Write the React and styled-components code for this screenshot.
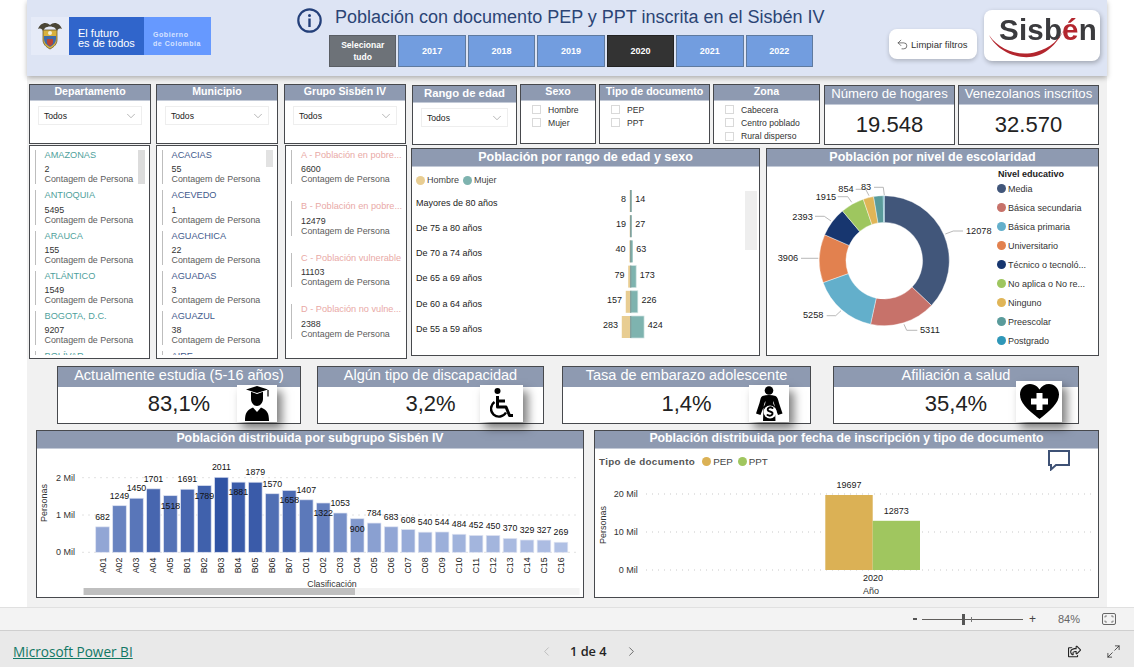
import React from "react";
import styled, { createGlobalStyle } from "styled-components";
import { ChevronDown, ChevronLeft, ChevronRight, Undo2, Maximize2 } from "lucide-react";
import { FaRegShareSquare } from "react-icons/fa";

const Global = createGlobalStyle`
  * { box-sizing: border-box; }
  html, body { margin: 0; padding: 0; background: #fff; }
  body { font-family: "Liberation Sans", Arial, sans-serif; color: #222; }
`;

const Page = styled.div`
  width: 1134px; height: 667px; overflow: hidden; display: flex; flex-direction: column; background: #fff;
`;
const Stage = styled.main`
  width: 1080px; height: 607px; margin-left: 27px; background: #f1f1f1; flex: none; filter: blur(.3px);
`;
const Header = styled.header`
  height: 76px; background: #dde4f4; display: flex; padding-left: 4px;
  box-shadow: 0 2px 5px rgba(0,0,0,.28); position: relative;
`;
const Logo = styled.div`
  width: 180px; height: 38px; margin-top: 17px; display: flex; flex: none;
`;
const Arms = styled.div`
  width: 38px; background: #e6ebf8; display: flex; align-items: center; justify-content: center;
`;
const LogoMain = styled.div`
  width: 75px; background: #3065cb; color: #fff; font-size: 11px; line-height: 10px; padding: 11px 0 0 9px;
`;
const LogoSide = styled.div`
  flex: 1; background: #6699ff; color: #d7e3ff; font-size: 7px; line-height: 9px; letter-spacing: .55px; padding: 13px 0 0 9px; font-weight: 700;
`;
const TitleBlock = styled.div`
  width: 527px; margin-left: 86px; padding-top: 8px; flex: none;
`;
const TitleRow = styled.div`
  height: 27px; display: flex; gap: 13px;
`;
const InfoIcon = styled.svg` flex: none; `;
const Title = styled.h1`
  margin: -1px 0 0; font-size: 18px; line-height: 20px; font-weight: 400; color: #2b4475; white-space: nowrap;
`;
const YearRow = styled.div`
  margin-left: 32px; width: 484px; height: 32px; display: grid; grid-template-columns: repeat(7, 1fr); gap: 2px;
`;
const YearButton = styled.button`
  border: 1px solid ${p => p.$kind === "on" ? "#222" : p.$kind === "all" ? "#5a5e64" : "#5f7a9f"};
  background: ${p => p.$kind === "on" ? "#333333" : p.$kind === "all" ? "#6d7278" : "#729ddf"};
  color: #fff; font: 700 ${p => p.$kind === "all" ? "8.5px/12px" : "9px/12px"} "Liberation Sans", sans-serif; padding: 0;
`;
const ClearButton = styled.button`
  width: 88px; height: 30px; margin: 29px 0 0 65px; border: 0; border-radius: 8px; background: #fff; flex: none;
  box-shadow: 0 2px 4px rgba(0,0,0,.2); display: flex; align-items: center; gap: 2px; padding: 0 0 0 7px;
  font: 400 9.5px "Liberation Sans", sans-serif; color: #333; white-space: nowrap;
`;
const SisbenBox = styled.div`
  position: relative; width: 116px; height: 51px; margin: 10px 0 0 7px; background: #fff; border-radius: 8px; flex: none;
  box-shadow: 1px 2px 5px rgba(0,0,0,.28); padding: 4px 0 0 15px;
  font-size: 29.5px; line-height: 32px; font-weight: 700; color: #3b3b3e; letter-spacing: .2px;
`;
const Accent = styled.span` color: #b3262e; `;
const Swoosh = styled.svg` position: absolute; left: 0; top: 0; `;

const Row = styled.div`
  display: flex; align-items: flex-start; margin-top: ${p => p.$mt}px; padding-left: ${p => p.$pl}px;
  position: relative; z-index: ${p => p.$z || 0};
`;
const Panel = styled.section`
  flex: none; width: ${p => p.$w}px; height: ${p => p.$h}px; margin-left: ${p => p.$ml || 0}px; margin-top: ${p => p.$mt || 0}px;
  background: #fff; border: 1px solid #47494d; position: relative; display: flex; flex-direction: column;
`;
const Head = styled.div`
  flex: none; height: ${p => p.$h}px; background: #8e9ab1; color: #fff; text-align: center; white-space: nowrap;
  font-size: ${p => p.$fs}px; font-weight: ${p => p.$fw || 400}; line-height: ${p => p.$lh || p.$h}px;
  border-bottom: ${p => p.$rule ? "1px solid #c3cad7" : "0"};
`;
const DropBox = styled.div`
  margin: 5px 8px 0; height: 19px; border: 1px solid #eee; display: flex; align-items: center; justify-content: space-between;
  padding: 0 3px 0 5px; font-size: 8.6px; color: #222;
`;
const Checks = styled.div`
  display: flex; flex-direction: column; gap: 4.4px; padding: ${p => p.$pad};
`;
const CheckRow = styled.label`
  display: flex; align-items: center; height: 9px; font-size: 8.6px; color: #333; white-space: nowrap;
`;
const Box = styled.span`
  width: 9px; height: 9px; border: 1px solid #d9d9d9; margin-right: ${p => p.$gap}px; background: #fff; flex: none;
`;
const BigNumber = styled.div`
  flex: 1; display: flex; align-items: center; justify-content: center; font-size: 22px; color: #222;
`;
const ListView = styled.div`
  height: 209px; overflow: hidden; padding-top: 4px;
`;
const ListItem = styled.div`
  height: 34.3px; margin: 0 0 ${p => p.$gap}px 5px; padding-left: ${p => p.$pl}px; border-left: 1px solid #bdbdbd; font-size: 8.9px; line-height: 10px; white-space: nowrap;
`;
const ItemTitle = styled.div` color: ${p => p.$c}; margin-bottom: 4.3px; font-size: 9.2px; `;
const ItemCount = styled.div` color: #333; `;
const ItemLabel = styled.div` color: #5c5c5c; `;
const Thumb = styled.div`
  position: absolute; top: ${p => p.$t}px; left: ${p => p.$l}px; width: ${p => p.$w}px; height: ${p => p.$h}px; background: ${p => p.$c};
`;
const LegendRow = styled.div`
  display: flex; align-items: center; height: 19px; flex: none; padding: ${p => p.$pt ?? 5}px 0 0 ${p => p.$pl}px; font-size: ${p => p.$fs || 9}px; color: #444; white-space: nowrap;
`;
const Dot = styled.span`
  width: ${p => p.$s || 9}px; height: ${p => p.$s || 9}px; border-radius: 50%; background: ${p => p.$c}; margin-right: ${p => p.$mr || 2}px; flex: none;
`;
const LegendName = styled.span`
  margin-right: ${p => p.$mr}px; font-weight: ${p => p.$strong ? 700 : 400}; letter-spacing: ${p => p.$strong ? ".35px" : "0"}; color: ${p => p.$strong ? "#555" : "#444"};
`;
const ChartBody = styled.div` flex: 1; display: flex; position: relative; min-height: 0; `;
const Plot = styled.svg` display: block; flex: none; `;
const T = styled.text`
  font-family: "Liberation Sans", sans-serif; font-size: ${p => p.$fs || 9}px; fill: ${p => p.$c || "#222"};
`;
const EduLegend = styled.div`
  position: absolute; left: 231px; top: 1px; width: 100px; font-size: 9px; color: #333; white-space: nowrap;
`;
const EduTitle = styled.div` font-weight: 700; color: #222; line-height: 13px; margin-bottom: -2px; `;
const EduItem = styled.div`
  display: flex; align-items: center; height: 19.05px; margin-left: -1px;
`;
const KpiValue = styled.div`
  flex: 1; display: flex; align-items: center; justify-content: center; font-size: 22px; color: #222; padding-bottom: 2px;
`;
const KpiIcon = styled.div`
  position: absolute; right: ${p => p.$r}px; top: ${p => p.$t}px; width: ${p => p.$w}px; height: ${p => p.$h}px; background: #fff;
  box-shadow: 5px 6px 9px rgba(0,0,0,.5); display: flex; align-items: center; justify-content: center; color: #000;
`;
const Bubble = styled.svg` position: absolute; left: 453px; top: 19px; `;

const StatusBar = styled.div`
  height: 24px; flex: none; background: #f3f3f3; border-top: 1px solid #e0e0e0; border-bottom: 1px solid #cfcfcf; display: flex; align-items: center; padding-left: 913px; font-size: 11px; color: #605e5c;
`;
const ZoomMinus = styled.span` width: 4px; height: 2px; background: #555; `;
const ZoomTrack = styled.div` position: relative; width: 101px; height: 1px; background: #605e5c; margin: 0 6px 0 5px; `;
const ZoomThumb = styled.span` position: absolute; left: 40px; top: -5px; width: 3px; height: 11px; background: #555; `;
const ZoomTick = styled.span` position: absolute; left: 49px; top: -2px; width: 1px; height: 5px; background: #777; `;
const ZoomPlus = styled.span` width: 9px; font-size: 12px; color: #444; `;
const ZoomPct = styled.span` margin-left: 20px; font-size: 11px; color: #666; `;
const FitIcon = styled.svg` margin-left: 22px; `;
const Footer = styled.footer`
  flex: 1; background: #e9e9e9; display: flex; align-items: center; padding: 4px 0 0 13px;
`;
const PowerLink = styled.a`
  font: 400 13.6px "Open Sans", sans-serif; color: #117865; text-decoration: underline; width: 526px; flex: none;
`;
const Pager = styled.div`
  display: flex; align-items: center; font: 600 12.8px "Open Sans", sans-serif; color: #252423; width: 500px; flex: none;
`;
const PageText = styled.span` margin: 0 17px 0 16px; `;
const FootIcons = styled.div` display: flex; gap: 25px; margin-left: 29px; color: #222; align-items: center; `;

const Arm = () => (
  <svg width="26" height="30" viewBox="0 0 26 30">
    <path d="M13 4C9 0 3 2 1 8c3-1 4 0 5 2l2-3c3-2 7-2 10 0l2 3c1-2 2-3 5-2-2-6-8-8-12-4z" fill="#4b4636" />
    <path d="M6 9h14v10c0 4-3 7-7 9-4-2-7-5-7-9z" fill="#d9b13c" stroke="#6d5a2c" strokeWidth=".8" />
    <path d="M7 15h12v3c0 3-2 6-6 8-4-2-6-5-6-8z" fill="#3f6aa8" />
    <path d="M10 18h6v3c0 2-1 3-3 4-2-1-3-2-3-4z" fill="#b84436" />
    <circle cx="13" cy="12" r="2" fill="#f4f0d8" />
  </svg>
);

const SelectFilter = ({ title, w, ml, mt, h = 60, fs = 10.6 }) => (
  <Panel $w={w} $ml={ml} $mt={mt} $h={h}>
    <Head $h={mt ? 17 : 16} $fs={fs} $fw={700} $lh={mt ? 15 : 13} $rule>{title}</Head>
    <DropBox>Todos<ChevronDown size={14} strokeWidth={.8} color="#666" /></DropBox>
  </Panel>
);
const CheckFilter = ({ title, w, ml, items, pad, gap }) => (
  <Panel $w={w} $ml={ml} $h={60}>
    <Head $h={16} $fs={10.6} $fw={700} $lh={13} $rule>{title}</Head>
    <Checks $pad={pad}>
      {items.map(i => <CheckRow key={i}><Box $gap={gap} />{i}</CheckRow>)}
    </Checks>
  </Panel>
);
const NumberCard = ({ title, value, w, ml }) => (
  <Panel $w={w} $ml={ml} $mt={1} $h={60}>
    <Head $h={19} $fs={13.2} $lh={15} $rule>{title}</Head>
    <BigNumber>{value}</BigNumber>
  </Panel>
);

const deptos = [["AMAZONAS", 2], ["ANTIOQUIA", 5495], ["ARAUCA", 155], ["ATLÁNTICO", 1549], ["BOGOTA, D.C.", 9207], ["BOLÍVAR"]];
const munis = [["ACACIAS", 55], ["ACEVEDO", 1], ["AGUACHICA", 22], ["AGUADAS", 3], ["AGUAZUL", 38], ["AIRE"]];
const grupos = [["A - Población en pobre...", 6600], ["B - Población en pobre...", 12479], ["C - Población vulnerable", 11103], ["D - Población no vulne...", 2388]];

const ListPanel = ({ w, ml, items, color, step = 6, pl = 8.5, children }) => (
  <Panel $w={w} $ml={ml} $h={214}>
    <ListView>
      {items.map(([n, v]) => (
        <ListItem key={n} $gap={step} $pl={pl}>
          <ItemTitle $c={color}>{n}</ItemTitle>
          {v !== undefined && <ItemCount>{v}</ItemCount>}
          {v !== undefined && <ItemLabel>Contagem de Persona</ItemLabel>}
        </ListItem>
      ))}
    </ListView>
    {children}
  </Panel>
);

const ages = [["Mayores de 80 años", 8, 14], ["De 75 a 80 años", 19, 27], ["De 70 a 74 años", 40, 63], ["De 65 a 69 años", 79, 173], ["De 60 a 64 años", 157, 226], ["De 55 a 59 años", 283, 424]];
const Pyramid = () => {
  const cx = 630.7, k = 0.0315;
  return (
    <Plot width={347} height={169} viewBox="412 186 347 169">
      {ages.map(([name, a, b], i) => {
        const y = 201 + i * 25.2;
        const wa = Math.max(1, a * k), wb = Math.max(1, b * k);
        return (
          <g key={name}>
            <T x={416} y={y + 1.7} dominantBaseline="central">{name}</T>
            <rect x={cx - wa} y={y - 11} width={wa} height={22} fill="#e8cd92" />
            <rect x={cx} y={y - 11} width={wb} height={22} fill="#7eb3af" stroke="#cfe3e1" strokeWidth={b > 100 ? .7 : 0} />
            <rect x={cx - .6} y={y - 11} width={1.2} height={22} fill="#7f9a96" />
            <T x={cx - wa - 3.8} y={y - 2} textAnchor="end" dominantBaseline="central">{a}</T>
            <T x={cx + wb + 3.6} y={y - 2} dominantBaseline="central">{b}</T>
          </g>
        );
      })}
    </Plot>
  );
};

const edu = [
  ["Media", 12078, "#41567a"], ["Básica secundaria", 5311, "#c7726a"], ["Básica primaria", 5258, "#63afcb"],
  ["Universitario", 3906, "#e2814f"], ["Técnico o tecnoló...", 2393, "#17366f"], ["No aplica o No re...", 1915, "#9ec65f"],
  ["Ninguno", 854, "#e0b557"], ["Preescolar", 772, "#5a9b9b"], ["Postgrado", 83, "#2f97b8"],
];
const donutLabels = [
  ["12078", 966, 231, "945.3,234 953.3,231 963,231"], ["5311", 920, 330, "904,324.3 906.7,330.3 917.3,330.3"],
  ["5258", 803, 315, "841,310.7 835.7,315.7 826.7,315.7"], ["3906", 777.7, 258, "818.3,258.3 801,258.3"],
  ["2393", 792.3, 216.5, "831,221 824.3,216.3 815,216.3"], ["1915", 815.7, 196.7, "851.7,202.3 847.7,196.7 837.7,196.7"],
  ["854", 838.3, 188.7, "869,195.7 865.7,189.3 855.7,189.3"], ["83", 861, 186.7, "884.3,195 883.3,187.3 874,187.3"],
];
const Donut = () => {
  const cx = 884.3, cy = 260.7, R = 65, r = 38.3;
  const total = edu.reduce((s, e) => s + e[1], 0);
  let acc = 0;
  const pt = (rad, f) => {
    const a = f * Math.PI * 2 - Math.PI / 2;
    return `${(cx + rad * Math.cos(a)).toFixed(2)} ${(cy + rad * Math.sin(a)).toFixed(2)}`;
  };
  return (
    <Plot width={331} height={188} viewBox="767 167 331 188">
      {edu.map(([n, v, c]) => {
        const a = acc / total; acc += v; const b = acc / total;
        const large = b - a > .5 ? 1 : 0;
        return <path key={n} fill={c} stroke="#fff" strokeWidth=".4"
          d={`M${pt(R, a)}A${R} ${R} 0 ${large} 1 ${pt(R, b)}L${pt(r, b)}A${r} ${r} 0 ${large} 0 ${pt(r, a)}Z`} />;
      })}
      {donutLabels.map(([t, x, y, pts]) => (
        <g key={t}>
          <polyline points={pts} fill="none" stroke="#a6a6a6" strokeWidth=".8" />
          <T x={x} y={y} $fs={9.2} dominantBaseline="central">{t}</T>
        </g>
      ))}
    </Plot>
  );
};

const subgroups = [682,1249,1450,1701,1518,1691,1789,2011,1881,1879,1570,1658,1407,1322,1053,900,784,683,608,540,544,484,452,450,370,329,327,269];
const subNames = [..."12345"].map(n => `A0${n}`).concat([..."1234567"].map(n => `B0${n}`), Array.from({ length: 16 }, (_, i) => `C${String(i + 1).padStart(2, "0")}`));
const inside = new Set([1518, 1789, 1881, 1658, 1322, 900]);
const barColor = v => {
  const t = (v - 269) / (2011 - 269);
  const m = (a, b) => Math.round(a + (b - a) * t);
  return `rgb(${m(176, 48)},${m(192, 83)},${m(228, 164)})`;
};
const SubgroupChart = () => {
  const y0 = 552.3, k = 0.0373;
  return (
    <Plot width={546} height={148} viewBox="37 449 546 148">
      {[[0, "0 Mil"], [1, "1 Mil"], [2, "2 Mil"]].map(([i, t]) => {
        const y = y0 - i * 37.3;
        return (
          <g key={t}>
            <line x1={82.5} x2={580} y1={y} y2={y} stroke="#c4c4c4" strokeDasharray="1 5" />
            <T x={75} y={y} textAnchor="end" dominantBaseline="central" $c="#333">{t}</T>
          </g>
        );
      })}
      <T transform="translate(44 503) rotate(-90)" textAnchor="middle" dominantBaseline="central" $c="#333">Personas</T>
      {subgroups.map((v, i) => {
        const x = 102.5 + i * 16.98, top = y0 - v * k;
        return (
          <g key={subNames[i]}>
            <rect x={x - 6.8} y={top} width={13.6} height={v * k} fill={barColor(v)} stroke="#dde2f1" strokeWidth=".7" />
            <T x={x} y={inside.has(v) ? top + 10 : top - 10} $fs={8.8} $c="#111" textAnchor="middle" dominantBaseline="central">{v}</T>
            <T transform={`translate(${x} 565.5) rotate(-90)`} $fs={8.8} textAnchor="middle" dominantBaseline="central">{subNames[i]}</T>
          </g>
        );
      })}
      <T x={332} y={583.7} $fs={8.8} textAnchor="middle" dominantBaseline="central" $c="#333">Clasificación</T>
      <rect x={83.6} y={588} width={496} height={7} fill="#f3f3f3" />
      <rect x={83.6} y={588} width={271.4} height={7} fill="#bfbfbf" />
    </Plot>
  );
};
const DocChart = () => (
  <Plot width={503} height={129} viewBox="595 468 503 129">
    {[[494, "20 Mil"], [532, "10 Mil"], [570, "0 Mil"]].map(([y, t]) => (
      <g key={t}>
        <line x1={646} x2={1093} y1={y} y2={y} stroke="#c9c9c9" strokeDasharray="1 5" />
        <T x={637.7} y={y} textAnchor="end" dominantBaseline="central" $c="#333">{t}</T>
      </g>
    ))}
    <T transform="translate(602.7 525) rotate(-90)" textAnchor="middle" dominantBaseline="central" $c="#333">Personas</T>
    <rect x={825.3} y={495} width={47.4} height={75} fill="#dbb155" />
    <rect x={872.7} y={520.8} width={47.3} height={49.2} fill="#a0c65f" />
    <T x={849} y={485} textAnchor="middle" dominantBaseline="central">19697</T>
    <T x={896.3} y={510.7} textAnchor="middle" dominantBaseline="central">12873</T>
    <T x={873} y={578} textAnchor="middle" dominantBaseline="central">2020</T>
    <T x={871} y={590.7} textAnchor="middle" dominantBaseline="central" $c="#333">Año</T>
  </Plot>
);

const GradIcon = () => (
  <svg width="26" height="35" viewBox="0 0 26 35" fill="#000">
    <path d="M2 3.500 13 0l11 3.500L13 7z" />
    <rect x="23.400" y="4" width="1.200" height="6.500" />
    <path d="M7 5.800 13 8l6-2.200V13c0 3.500-2.700 7-6 7s-6-3.500-6-7z" />
    <path d="M1 35c0-8 2-11 8-13.500l4 4.500 4-4.500c6 2.500 8 5.500 8 13.500z" />
  </svg>
);
const WheelIcon = () => (
  <svg width="24" height="31" viewBox="0 0 24 31">
    <circle cx="7.500" cy="3" r="3" fill="#000" />
    <path d="M7.500 8v11h8.500l3.500 8.500H23M7.500 13H15" fill="none" stroke="#000" strokeWidth="3" strokeLinejoin="round" />
    <path d="M4.500 14a8 8 0 1 0 11.500 10.500" fill="none" stroke="#000" strokeWidth="2.400" />
  </svg>
);
const PregnantIcon = () => (
  <svg width="28" height="35" viewBox="0 0 28 35">
    <circle cx="14" cy="4.500" r="4.300" fill="#000" />
    <path d="M7.500 10c4-1.500 9-1.500 13 0 2 1 2.500 3.500 3.500 7 1 3.500 2.500 7 3.500 10.500l-4.500 1.500c-1-3-2-5-3-7.500-.5-3-1-5-2-6.500 0 3 1 4.500 2 6l.5 14.500H8L8.500 21c1-1.500 2-3 2-6-1 1.500-1.500 3.500-2 6.500-1 2.500-2 4.500-3 7.500L1 27.500C2 24 3.500 20.500 4.500 17c1-3.500 1-6 3-7z" fill="#000" />
    <circle cx="15" cy="26" r="6.500" fill="#fff" />
    <path d="M17.500 22c-2.500-1.500-5 0-4.800 1.800.3 2.200 4.300 1 4.800 3.200.4 2-2.500 3.500-5 2" fill="none" stroke="#000" strokeWidth="2" strokeLinecap="round" />
  </svg>
);
const HeartIcon = () => (
  <svg width="39" height="35" viewBox="0 0 39 35">
    <path d="M19.500 35C8 26 0 19 0 10.500 0 4.500 4.500 0 10 0c4 0 7.500 2 9.500 5.500C21.500 2 25 0 29 0c5.500 0 10 4.500 10 10.500C39 19 31 26 19.500 35z" fill="#000" />
    <path d="M16.500 9h6v5.500H28v6h-5.500V26h-6v-5.500H11v-6h5.500z" fill="#fff" />
  </svg>
);

const kpis = [
  { t: "Actualmente estudia (5-16 años)", v: "83,1%", w: 244, ml: 0, icon: <GradIcon />, r: 23, top: 18, iw: 40, ih: 37 },
  { t: "Algún tipo de discapacidad", v: "3,2%", w: 227, ml: 16, icon: <WheelIcon />, r: 20, top: 18, iw: 43, ih: 37 },
  { t: "Tasa de embarazo adolescente", v: "1,4%", w: 249, ml: 18, icon: <PregnantIcon />, r: 21, top: 18, iw: 40, ih: 37 },
  { t: "Afiliación a salud", v: "35,4%", w: 246, ml: 22, icon: <HeartIcon />, r: 16, top: 14, iw: 46, ih: 41 },
];

export default function App() {
  return (
    <Page>
      <Global />
      <Stage>
        <Header>
          <Logo>
            <Arms><Arm /></Arms>
            <LogoMain>El futuro<br />es de todos</LogoMain>
            <LogoSide>Gobierno<br />de Colombia</LogoSide>
          </Logo>
          <TitleBlock>
            <TitleRow>
              <InfoIcon width="25" height="25" viewBox="0 0 25 25">
                <circle cx="12.500" cy="12.500" r="11.200" fill="none" stroke="#24407a" strokeWidth="2.200" />
                <circle cx="12.500" cy="7.500" r="1.500" fill="#24407a" />
                <rect x="11.300" y="10.500" width="2.400" height="8.500" fill="#24407a" />
              </InfoIcon>
              <Title>Población con documento PEP y PPT inscrita en el Sisbén IV</Title>
            </TitleRow>
            <YearRow>
              <YearButton $kind="all">Selecionar<br />tudo</YearButton>
              {[2017, 2018, 2019, 2020, 2021, 2022].map(y => (
                <YearButton key={y} $kind={y === 2020 ? "on" : "off"}>{y}</YearButton>
              ))}
            </YearRow>
          </TitleBlock>
          <ClearButton><Undo2 size={13} strokeWidth={1.2} />Limpiar filtros</ClearButton>
          <SisbenBox>
            Sisb<Accent>é</Accent>n
            <Swoosh width="116" height="51" viewBox="0 0 116 51">
              <path d="M5 25C15 45 45 55 64 40 72 34 78 25 82 15 76 30 66 38 52 42 35 47 15 40 5 25Z" fill="#b3262e" />
            </Swoosh>
          </SisbenBox>
        </Header>

        <Row $mt={8} $pl={2}>
          <SelectFilter title="Departamento" w={122} />
          <SelectFilter title="Municipio" w={122} ml={5} />
          <SelectFilter title="Grupo Sisbén IV" w={122} ml={6} />
          <SelectFilter title="Rango de edad" w={105} ml={6} mt={1} fs={11.3} />
          <CheckFilter title="Sexo" w={76} ml={3} items={["Hombre", "Mujer"]} pad="4px 0 0 11px" gap={7} />
          <CheckFilter title="Tipo de documento" w={111} ml={3} items={["PEP", "PPT"]} pad="4px 0 0 11px" gap={7} />
          <CheckFilter title="Zona" w={107} ml={3} items={["Cabecera", "Centro poblado", "Rural disperso"]} pad="4px 0 0 11px" gap={7} />
          <NumberCard title="Número de hogares" value="19.548" w={131} ml={4} />
          <NumberCard title="Venezolanos inscritos" value="32.570" w={141} ml={3} />
        </Row>

        <Row $mt={0} $pl={2}>
          <ListPanel w={121} items={deptos} color="#4f9f9c">
            <Thumb $t={4} $l={108} $w={7} $h={34} $c="#dcdcdc" />
          </ListPanel>
          <ListPanel w={122} ml={6} items={munis} color="#3f5a8c">
            <Thumb $t={4} $l={109} $w={7} $h={17} $c="#e2e2e2" />
          </ListPanel>
          <ListPanel w={122} ml={7} items={grupos} color="#e9a9a6" step={17.2} pl={9} />
          <Panel $w={349} $ml={4} $mt={3} $h={208}>
            <Head $h={18} $fs={12.5} $fw={700} $lh={16} $rule>Población por rango de edad y sexo</Head>
            <LegendRow $pl={4} $pt={7}>
              <Dot $c="#e8cd92" /><LegendName $mr={4}>Hombre</LegendName>
              <Dot $c="#7eb3af" /><LegendName $mr={0}>Mujer</LegendName>
            </LegendRow>
            <Pyramid />
            <Thumb $t={42} $l={333} $w={12} $h={59} $c="#eeeeee" />
          </Panel>
          <Panel $w={333} $ml={6} $mt={3} $h={208}>
            <Head $h={18} $fs={12.5} $fw={700} $lh={16} $rule>Población por nivel de escolaridad</Head>
            <ChartBody>
              <Donut />
              <EduLegend>
                <EduTitle>Nivel educativo</EduTitle>
                {edu.map(([n, , c]) => <EduItem key={n}><Dot $c={c} />{n}</EduItem>)}
              </EduLegend>
            </ChartBody>
          </Panel>
        </Row>

        <Row $mt={7} $pl={30} $z={2}>
          {kpis.map(k => (
            <Panel key={k.t} $w={k.w} $ml={k.ml} $h={58}>
              <Head $h={20} $fs={14.5} $lh={17}>{k.t}</Head>
              <KpiValue>{k.v}</KpiValue>
              <KpiIcon $r={k.r} $t={k.top} $w={k.iw} $h={k.ih}>{k.icon}</KpiIcon>
            </Panel>
          ))}
        </Row>

        <Row $mt={6} $pl={9}>
          <Panel $w={548} $h={168}>
            <Head $h={18} $fs={12.3} $fw={700} $lh={15} $rule>Población distribuida por subgrupo Sisbén IV</Head>
            <SubgroupChart />
          </Panel>
          <Panel $w={505} $ml={10} $h={168}>
            <Head $h={18} $fs={12.3} $fw={700} $lh={15} $rule>Población distribuida por fecha de inscripción y tipo de documento</Head>
            <LegendRow $pl={4} $fs={9.8}>
              <LegendName $mr={7} $strong>Tipo de documento</LegendName>
              <Dot $c="#dbb155" /><LegendName $mr={5}>PEP</LegendName>
              <Dot $c="#a0c65f" /><LegendName $mr={0}>PPT</LegendName>
            </LegendRow>
            <DocChart />
            <Bubble width="22" height="21" viewBox="0 0 22 21">
              <path d="M1 1h20v14H8l-5 4.500V15H1z" fill="#fff" stroke="#3e5175" strokeWidth="2" />
            </Bubble>
          </Panel>
        </Row>
      </Stage>

      <StatusBar>
        <ZoomMinus />
        <ZoomTrack><ZoomThumb /><ZoomTick /></ZoomTrack>
        <ZoomPlus>+</ZoomPlus>
        <ZoomPct>84%</ZoomPct>
        <FitIcon width="14" height="12" viewBox="0 0 14 12">
          <rect x=".5" y=".5" width="13" height="11" rx="1.500" fill="none" stroke="#666" />
          <path d="M3 4.500V3h2M11 4.500V3H9M3 7.500V9h2M11 7.500V9H9" fill="none" stroke="#666" strokeWidth=".8" />
        </FitIcon>
      </StatusBar>
      <Footer>
        <PowerLink href="#">Microsoft Power BI</PowerLink>
        <Pager>
          <ChevronLeft size={15} strokeWidth={1.2} color="#b0b0b0" />
          <PageText>1 de 4</PageText>
          <ChevronRight size={15} strokeWidth={1.2} color="#444" />
        </Pager>
        <FootIcons>
          <FaRegShareSquare size={13} />
          <Maximize2 size={15} strokeWidth={1.2} />
        </FootIcons>
      </Footer>
    </Page>
  );
}
